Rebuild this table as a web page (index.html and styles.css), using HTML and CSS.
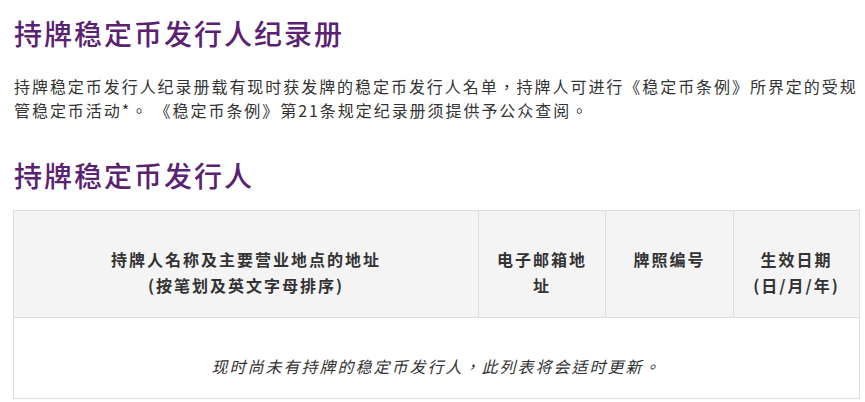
FILE: index.html
```html
<!DOCTYPE html>
<html lang="zh-HK">
<head>
<meta charset="utf-8">
<title>持牌稳定币发行人纪录册</title>
<link rel="stylesheet" href="styles.css">
</head>
<body>
<main class="page">
  <h1 class="title">持牌稳定币发行人纪录册</h1>
  <p class="intro">持牌稳定币发行人纪录册载有现时获发牌的稳定币发行人名单，持牌人可进行《稳定币条例》所界定的受规管稳定币活动*。 《稳定币条例》第21条规定纪录册须提供予公众查阅。</p>
  <h2 class="subtitle">持牌稳定币发行人</h2>
  <table class="register">
    <colgroup>
      <col class="c1"><col class="c2"><col class="c3"><col class="c4">
    </colgroup>
    <thead>
      <tr>
        <th>持牌人名称及主要营业地点的地址<br>(按笔划及英文字母排序)</th>
        <th>电子邮箱地址</th>
        <th>牌照编号</th>
        <th>生效日期<br>(日/月/年)</th>
      </tr>
    </thead>
    <tbody>
      <tr>
        <td colspan="4" class="empty">现时尚未有持牌的稳定币发行人，此列表将会适时更新。</td>
      </tr>
    </tbody>
  </table>
</main>
</body>
</html>
```
FILE: styles.css
```css
html, body {
  margin: 0;
  padding: 0;
  background: #ffffff;
}
body {
  font-family: "Noto Sans CJK TC", "Noto Sans CJK SC", "Noto Sans", sans-serif;
  color: #333333;
  font-size: 16px;
}
.page {
  padding: 16px 0 0 13px;
  width: 846px;
}
.title,
.subtitle {
  margin: 0;
  font-size: 28px;
  line-height: 34px;
  font-weight: 500;
  letter-spacing: 2px;
  color: #5a2270;
  padding-left: 1px;
}
.intro {
  margin: 25px 0 0 0;
  padding-left: 1px;
  font-size: 16px;
  line-height: 23.5px;
  letter-spacing: 1.95px;
  color: #333333;
}
.subtitle {
  margin-top: 36px;
}
.register {
  margin-top: 18px;
  width: 846px;
  border-collapse: collapse;
  table-layout: fixed;
  letter-spacing: 2px;
}
.register .c1 { width: 465px; }
.register .c2 { width: 127px; }
.register .c3 { width: 128px; }
.register .c4 { width: 126px; }
.register th,
.register td {
  border: 1px solid #dddddd;
  text-align: center;
  vertical-align: top;
  font-size: 16px;
  line-height: 25.5px;
  padding: 36px 12px 19px;
}
.register th {
  background: #f4f4f4;
  font-weight: 700;
  color: #333333;
}
.register td.empty {
  font-style: italic;
  color: #333333;
  padding: 36px 12px 18px;
}
```
